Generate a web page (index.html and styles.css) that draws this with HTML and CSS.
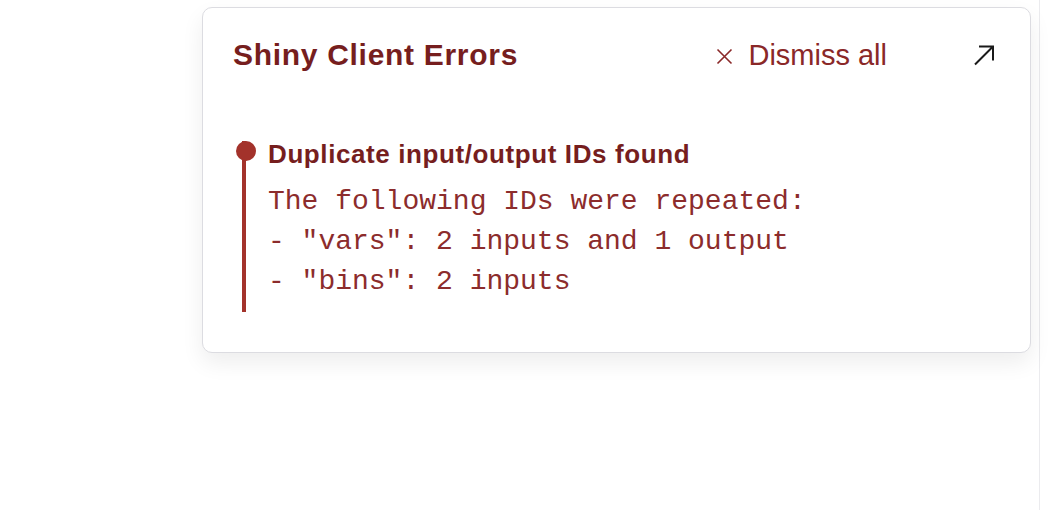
FILE: index.html
```html
<!DOCTYPE html>
<html lang="en">
<head>
<meta charset="utf-8">
<title>Shiny Client Errors</title>
<link rel="stylesheet" href="styles.css">
</head>
<body>
<div class="page">
  <section class="card">
    <header class="card-head">
      <h1 class="title">Shiny Client Errors</h1>
      <button class="dismiss" type="button">
        <svg class="x-icon" width="17" height="17" viewBox="0 0 17 17" aria-hidden="true">
          <path d="M1.5 1.5 L15.5 15.5 M15.5 1.5 L1.5 15.5" stroke="currentColor" stroke-width="1.6" fill="none"/>
        </svg>
        <span>Dismiss all</span>
      </button>
      <button class="expand" type="button" aria-label="Open">
        <svg width="22" height="22" viewBox="0 0 22 22" aria-hidden="true">
          <path d="M2 20.5 L20 2.5 M6 2.5 H20 V16.5" stroke="#1a1a1a" stroke-width="2" fill="none"/>
        </svg>
      </button>
    </header>
    <div class="error-item">
      <h2 class="error-title">Duplicate input/output IDs found</h2>
      <pre class="error-body">The following IDs were repeated:
- "vars": 2 inputs and 1 output
- "bins": 2 inputs</pre>
    </div>
  </section>
</div>
</body>
</html>
```

FILE: styles.css
```css
html, body {
  margin: 0;
  padding: 0;
  background: #ffffff;
}

.page {
  width: 1040px;
  height: 510px;
  box-sizing: border-box;
  border-right: 1px solid #ebebee;
  padding-top: 7px;
  padding-left: 202px;
}

.card {
  box-sizing: border-box;
  width: 829px;
  height: 346px;
  border: 1px solid #dcdce1;
  border-radius: 10px;
  background: #fff;
  box-shadow: 0 10px 22px rgba(0, 0, 0, 0.07);
  padding: 31px 35px 0 30px;
  font-family: "Liberation Sans", Arial, Helvetica, sans-serif;
}

.card-head {
  display: flex;
  align-items: center;
  height: 32px;
}

.title {
  margin: 0;
  font-size: 30px;
  line-height: 32px;
  font-weight: 700;
  letter-spacing: 0.7px;
  color: #761e1e;
}

.dismiss {
  margin-left: auto;
  display: flex;
  align-items: center;
  gap: 15px;
  border: 0;
  background: none;
  padding: 0;
  font-family: inherit;
  font-size: 29px;
  line-height: 32px;
  color: #8a2828;
  cursor: pointer;
}

.x-icon {
  display: block;
  margin-top: 2px;
}

.expand {
  margin-left: 86px;
  border: 0;
  background: none;
  padding: 0;
  display: block;
}

.expand svg {
  display: block;
}

.error-item {
  position: relative;
  margin-top: 70px;
  margin-left: 9px;
  border-left: 4px solid #a3322b;
  padding: 0 0 10px 22px;
}

.error-item::before {
  content: "";
  position: absolute;
  left: -10px;
  top: 0;
  width: 20px;
  height: 20px;
  border-radius: 50%;
  background: #a3322b;
}

.error-title {
  margin: 0;
  font-size: 26px;
  line-height: 26px;
  font-weight: 700;
  letter-spacing: 0.6px;
  color: #761e1e;
}

.error-body {
  margin: 15px 0 0;
  font-family: "Liberation Mono", "Courier New", monospace;
  font-size: 28px;
  line-height: 40px;
  color: #8c2c2c;
}
```
